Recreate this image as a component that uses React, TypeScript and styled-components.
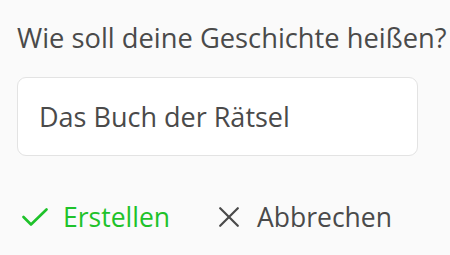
import styled, { createGlobalStyle } from 'styled-components';

const GlobalStyle = createGlobalStyle`
  html, body {
    margin: 0;
    padding: 0;
    background: #fafafa;
  }
  body {
    font-family: 'Open Sans', 'Noto Sans', sans-serif;
    color: #4a4a4a;
  }
`;

const StyledDialog = styled.div`
  display: flex;
  flex-direction: column;
  width: 450px;
  height: 255px;
  padding: 20px 0 0 17px;
  box-sizing: border-box;
`;

const StyledTitle = styled.div`
  font-size: 27.3px;
  line-height: 36px;
  white-space: nowrap;
`;

const StyledInput = styled.input`
  margin-top: 21px;
  width: 401px;
  height: 79px;
  box-sizing: border-box;
  border: 1px solid #e3e3e3;
  border-radius: 9px;
  background: #ffffff;
  padding: 0 21px;
  font-family: inherit;
  font-size: 27px;
  color: #4a4a4a;
  outline: none;
`;

const StyledActions = styled.div`
  display: flex;
  align-items: center;
  gap: 49px;
  margin-top: 43px;
  padding-left: 5px;
`;

const StyledAction = styled.button<{ $primary?: boolean }>`
  display: flex;
  align-items: center;
  gap: ${(p) => (p.$primary ? '15px' : '18px')};
  border: none;
  background: none;
  padding: 0;
  cursor: pointer;
  font-family: inherit;
  font-size: 26.5px;
  color: ${(p) => (p.$primary ? '#1ec22a' : '#4a4a4a')};
`;

const App = () => {
  return (
    <>
      <GlobalStyle />
      <StyledDialog>
        <StyledTitle>Wie soll deine Geschichte heißen?</StyledTitle>
        <StyledInput defaultValue="Das Buch der Rätsel" />
        <StyledActions>
          <StyledAction $primary>
            <svg width="26" height="18" viewBox="0 0 26 18" fill="none">
              <path d="M1.5 9 L9 16.5 L24.5 1.5" stroke="currentColor" strokeWidth="2.6" strokeLinecap="round" strokeLinejoin="round" />
            </svg>
            Erstellen
          </StyledAction>
          <StyledAction>
            <svg width="20" height="20" viewBox="0 0 20 20" fill="none">
              <path d="M1.2 1.2 L18.8 18.8 M18.8 1.2 L1.2 18.8" stroke="currentColor" strokeWidth="2.2" strokeLinecap="round" />
            </svg>
            Abbrechen
          </StyledAction>
        </StyledActions>
      </StyledDialog>
    </>
  );
};

export default App;
